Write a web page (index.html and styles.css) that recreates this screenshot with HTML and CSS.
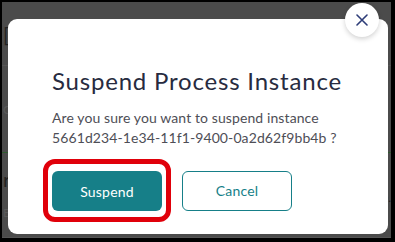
FILE: index.html
```html
<!DOCTYPE html>
<html>
<head>
<meta charset="utf-8">
<link rel="stylesheet" href="styles.css">
</head>
<body>
<div class="page">
  <div class="bg">
    <div class="bg-row bg-row-1"><span class="bg-glyph">[</span></div>
    <div class="bg-row bg-row-2"><span class="bg-glyph small">C</span></div>
    <div class="bg-row bg-row-3"><span class="bg-glyph">r</span><span class="bg-glyph right">0.</span></div>
    <div class="bg-row bg-row-4"><span class="bg-glyph small">E</span></div>
  </div>
  <div class="modal">
    <h1 class="title">Suspend Process Instance</h1>
    <p class="message">Are you sure you want to suspend instance<br>5661d234-1e34-11f1-9400-0a2d62f9bb4b ?</p>
    <div class="actions">
      <div class="highlight"><button class="btn btn-primary">Suspend</button></div>
      <button class="btn btn-secondary">Cancel</button>
    </div>
  </div>
  <button class="close" aria-label="Close">
    <svg width="12" height="12" viewBox="0 0 12 12"><path d="M1 1 L11 11 M11 1 L1 11" stroke="#2e3d78" stroke-width="1.6" stroke-linecap="round" fill="none"/></svg>
  </button>
</div>
</body>
</html>
```
FILE: styles.css
```css
html, body {
  margin: 0;
  padding: 0;
  background: #000;
  width: 395px;
  height: 242px;
  overflow: hidden;
}
body {
  padding: 2px 4px 4px 2px;
  box-sizing: border-box;
  font-family: Lato, "Noto Sans", sans-serif;
}
.page {
  position: relative;
  width: 389px;
  height: 236px;
  background: #4b4b4b;
  overflow: hidden;
}
.bg {
  display: flex;
  flex-direction: column;
  height: 100%;
}
.bg-row {
  display: flex;
  justify-content: space-between;
  border-bottom: 1px solid #555;
  color: #222;
  font-size: 20px;
  padding-left: 1px;
}
.bg-row-1 { height: 63px; align-items: center; }
.bg-row-2 { height: 86px; border-bottom-color: #2f5a2f; align-items: center; }
.bg-row-3 { height: 52px; align-items: center; border-bottom: none; }
.bg-row-4 { flex: 1; }
.bg-glyph.small { font-size: 12px; color: #5a5a5a; }
.bg-glyph.right { font-size: 12px; align-self: flex-end; padding-right: 0; color: #222; }
.modal {
  position: absolute;
  left: 6px;
  top: 17px;
  width: 380px;
  height: 215px;
  background: #fff;
  border-radius: 9px;
  box-sizing: border-box;
  padding: 47px 20px 0 44px;
}
.title {
  margin: 0;
  font-weight: 400;
  font-size: 24px;
  line-height: 30px;
  color: #272b40;
  letter-spacing: 0.8px;
}
.message {
  margin: 12px 0 0 0;
  font-size: 14px;
  line-height: 20px;
  color: #4e4e56;
  letter-spacing: 0.1px;
}
.actions {
  display: flex;
  align-items: center;
  gap: 11px;
  margin-top: 11px;
  margin-left: -9px;
}
.highlight {
  border: 5px solid #e0000a;
  border-radius: 12px;
  padding: 7px 4px 6px 4px;
  display: flex;
}
.btn {
  width: 110px;
  height: 40px;
  border-radius: 6px;
  font-family: inherit;
  font-size: 14px;
  letter-spacing: 0.2px;
  cursor: pointer;
}
.btn-primary {
  background: #167f88;
  border: none;
  color: #fff;
}
.btn-secondary {
  background: #fff;
  border: 1px solid #167f88;
  color: #167f88;
}
.close {
  position: absolute;
  left: 343px;
  top: 1px;
  width: 34px;
  height: 34px;
  border-radius: 50%;
  border: none;
  background: #fff;
  box-shadow: 0 2px 5px rgba(0,0,0,0.18);
  display: flex;
  align-items: center;
  justify-content: center;
  padding: 0;
}
```
